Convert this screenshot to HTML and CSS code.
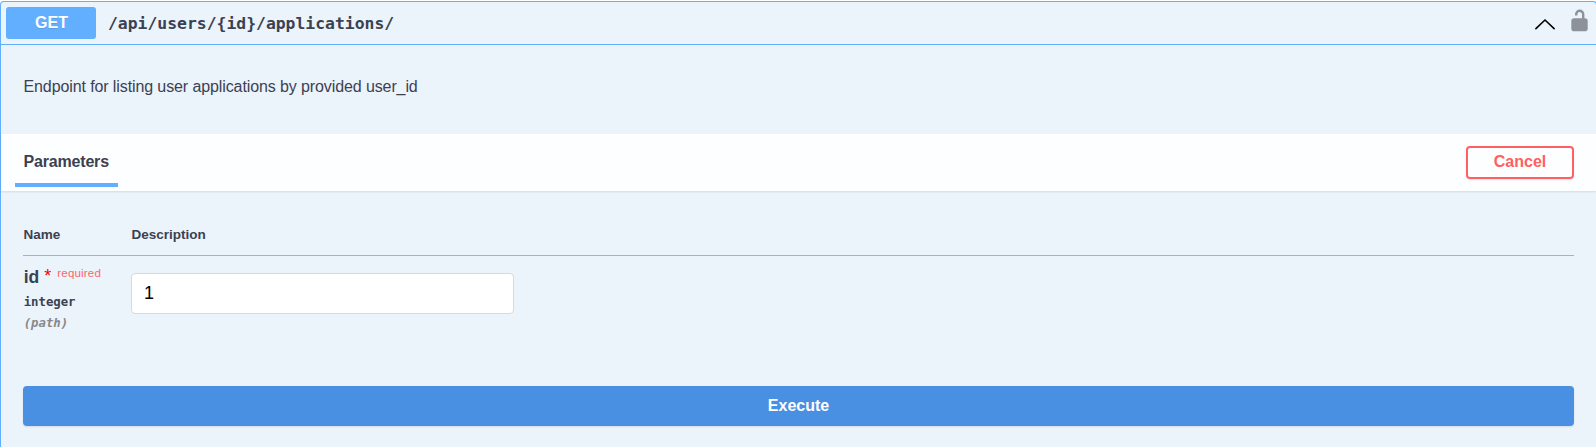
FILE: index.html
```html
<!DOCTYPE html>
<html lang="en">
<head>
<meta charset="utf-8">
<title>API operation</title>
<link rel="stylesheet" href="styles.css">
</head>
<body>
<section class="opblock">
  <header class="summary">
    <span class="method">GET</span>
    <span class="path">/api/users/{id}/applications/</span>
    <svg class="arrow" width="20" height="20" viewBox="0 0 20 20"><path d="M.9 13.600 10 5l9.100 8.600" fill="none" stroke="#000" stroke-width="1.600" stroke-linecap="round"/></svg>
    <svg class="lock" width="20" height="24" viewBox="0 0 20 24"><path d="M7.200 7.500V6.300a3.500 3.500 0 0 1 7 0V12" fill="none" stroke="#8c9297" stroke-width="2.400"/><rect x="2.300" y="10.300" width="16.400" height="12.900" rx="2.800" fill="#8c9297"/></svg>
  </header>
  <p class="description">Endpoint for listing user applications by provided user_id</p>
  <div class="section-header">
    <h4 class="tab">Parameters</h4>
    <button class="cancel">Cancel</button>
  </div>
  <div class="parameters">
    <div class="table-head"><span>Name</span><span>Description</span></div>
    <div class="table-row">
      <div class="param">
        <div class="name">id<span class="star">*</span><span class="required">required</span></div>
        <div class="type">integer</div>
        <div class="in">(path)</div>
      </div>
      <input class="value" type="text" value="1">
    </div>
  </div>
  <button class="execute">Execute</button>
</section>
</body>
</html>
```
FILE: styles.css
```css
* { box-sizing: border-box; }
body { margin: 0; overflow: hidden; background: #fff; font-family: "Liberation Sans", Arial, sans-serif; color: #3b4151; }
.opblock { width: 1597px; height: 446px; margin-top: 1px; border: 1px solid #61affe; border-bottom: 0; border-radius: 4px 4px 0 0; background: #ebf3fb; }
.summary { display: flex; align-items: center; height: 43px; padding: 0 7px 0 5px; border-bottom: 1px solid #61affe; }
.method { width: 90px; height: 32px; margin-bottom: 1px; padding-left: 1px; border-radius: 3px; background: #61affe; color: #fff; font-size: 16px; font-weight: 700; line-height: 31px; text-align: center; text-shadow: 0 1px 0 rgba(0,0,0,.1); }
.path { flex: 1; padding: 1px 0 0 12px; font: 700 16.4px/20px "DejaVu Sans Mono", monospace; }
.arrow { margin: 3px 14px 0 0; }
.lock { margin: 0 0 6px; }
.description { height: 89px; margin: 0; padding: 32px 22px 0 22.500px; font-size: 16px; line-height: 20px; letter-spacing: -.105px; }
.section-header { display: flex; align-items: center; justify-content: space-between; height: 57px; padding: 0 22px 0 13px; background: rgba(255,255,255,.85); box-shadow: 0 1px 2px rgba(0,0,0,.1); }
.tab { align-self: flex-end; width: 103px; height: 35px; margin: 0 0 4px .500px; padding-left: 9px; border-bottom: 4px solid #61affe; font-size: 16px; line-height: 20px; letter-spacing: -.18px; white-space: nowrap; }
.cancel { width: 108px; height: 33px; padding: 0 0 2px; border: 2px solid #ff6060; border-radius: 4px; background: transparent; box-shadow: 0 1px 2px rgba(0,0,0,.1); color: #ff6060; font: 700 16px "Liberation Sans", Arial, sans-serif; }
.parameters { height: 195px; padding: 34px 22px 0; }
.table-head, .table-row { display: grid; grid-template-columns: 108px 383px; }
.table-head { height: 31px; padding-left: .500px; border-bottom: 1px solid #a9b1b9; font-size: 13.500px; font-weight: 700; line-height: 19px; }
.param { padding-left: .700px; }
.name { display: flex; height: 36px; padding-top: 10px; font-size: 17.500px; font-weight: 700; line-height: 22px; }
.star { margin-left: 5px; color: #f00; font-size: 18px; font-weight: 400; line-height: 21px; }
.required { margin-left: 6px; color: #ff6468; font-size: 11.500px; font-weight: 400; line-height: 15px; letter-spacing: .2px; }
.type, .in { font: 700 12.300px/21px "DejaVu Sans Mono", monospace; }
.in { color: #888; font-style: italic; }
.value { width: 383px; height: 41px; margin: 17px 0 0; padding: 0 12px; border: 1px solid #d9d9d9; border-radius: 4px; background: #fff; color: #000; font: 18px "Liberation Sans", Arial, sans-serif; }
.execute { display: block; width: 1551px; height: 40px; margin: 0 0 0 22px; padding: 0 0 1px; border: 0; border-radius: 4px; background: #4990e2; box-shadow: 0 1px 2px rgba(0,0,0,.1); color: #fff; font: 700 16px "Liberation Sans", Arial, sans-serif; }
```
